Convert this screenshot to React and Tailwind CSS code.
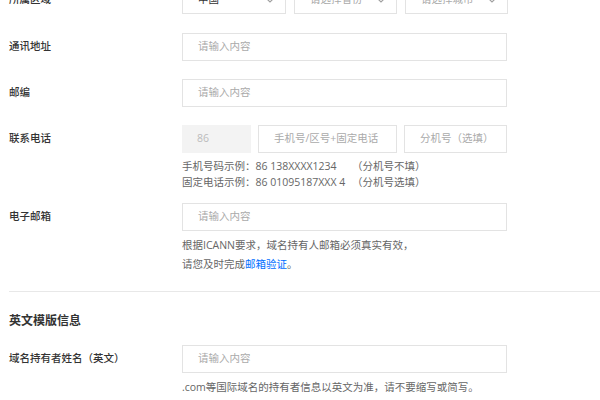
function Chevron() {
    return (
        <svg width="8" height="5" viewBox="0 0 8 5" className="shrink-0">
            <path d="M1 1l3 3 3-3" fill="none" stroke="#a0a0a0" strokeWidth="1.2"/>
        </svg>
    );
}

function Select({value, placeholder, className}) {
    return (
        <div className={"h-[28px] border border-[#e3e3e3] flex items-center justify-between pl-[15px] pr-[11px] " + className}>
            <span className={value ? "text-[#333]" : "text-[#aaa]"}>{value || placeholder}</span>
            <Chevron/>
        </div>
    );
}

function Input({placeholder, className = "w-[325px]"}) {
    return (
        <div className={"h-[28px] border border-[#e3e3e3] flex items-center pl-[15px] text-[#aaa] whitespace-nowrap " + className}>
            {placeholder}
        </div>
    );
}

function Label({children}) {
    return (
        <div className="w-[182px] shrink-0 pl-[9px] h-[28px] flex items-center text-[#333] font-medium">{children}</div>
    );
}

function App() {
    return (
        <div className="w-[600px] h-[400px] overflow-hidden bg-white text-[10.5px] font-['Open_Sans','Noto_Sans_CJK_SC',sans-serif]">
            <div className="-mt-[14px]">
                <div className="flex">
                    <Label>所属区域</Label>
                    <div className="flex gap-[8px]">
                        <Select value="中国" className="w-[104px]"/>
                        <Select placeholder="请选择省份" className="w-[103px]"/>
                        <Select placeholder="请选择城市" className="w-[103px]"/>
                    </div>
                </div>

                <div className="flex mt-[19px]">
                    <Label>通讯地址</Label>
                    <Input placeholder="请输入内容"/>
                </div>

                <div className="flex mt-[18px]">
                    <Label>邮编</Label>
                    <Input placeholder="请输入内容"/>
                </div>

                <div className="flex mt-[18px]">
                    <Label>联系电话</Label>
                    <div>
                        <div className="flex gap-[7px]">
                            <div className="w-[69px] h-[28px] bg-[#f3f3f3] flex items-center pl-[15px] text-[#bbb]">86</div>
                            <Input placeholder="手机号/区号+固定电话" className="w-[139px]"/>
                            <Input placeholder="分机号（选填）" className="w-[103px]"/>
                        </div>
                        <div className="mt-[5px] leading-[16px] text-[#666] whitespace-nowrap">
                            <div className="flex">
                                <span className="w-[170px]">手机号码示例：86 138XXXX1234</span>
                                <span>（分机号不填）</span>
                            </div>
                            <div className="flex">
                                <span className="w-[170px]">固定电话示例：86 01095187XXX 4</span>
                                <span>（分机号选填）</span>
                            </div>
                        </div>
                    </div>
                </div>

                <div className="flex mt-[13px]">
                    <Label>电子邮箱</Label>
                    <div>
                        <Input placeholder="请输入内容"/>
                        <div className="mt-[5px] leading-[19px] text-[#666] whitespace-nowrap">
                            <div>根据ICANN要求，域名持有人邮箱必须真实有效，</div>
                            <div>请您及时完成<span className="text-[#006eff]">邮箱验证</span>。</div>
                        </div>
                    </div>
                </div>

                <div className="ml-[9px] mt-[17px] h-px bg-[#e8e8e8]"></div>

                <div className="pl-[9px] mt-[19px] leading-[20px] text-[12px] font-bold text-[#333]">英文模版信息</div>

                <div className="flex mt-[14px]">
                    <Label>域名持有者姓名（英文）</Label>
                    <div>
                        <Input placeholder="请输入内容"/>
                        <div className="mt-[5px] leading-[19px] text-[#666] whitespace-nowrap">
                            <div>.com等国际域名的持有者信息以英文为准，请不要缩写或简写。</div>
                            <div>中国大陆用户请使用系统自动翻译的拼音，其他地区用户如您已有注册</div>
                        </div>
                    </div>
                </div>
            </div>
        </div>
    );
}

export default App;
